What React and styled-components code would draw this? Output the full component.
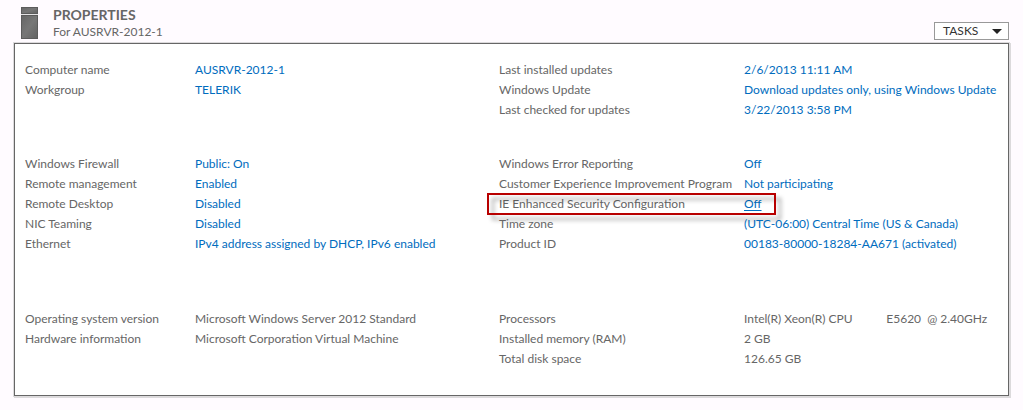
import React from "react";
import styled, { createGlobalStyle, css } from "styled-components";

const GlobalStyle = createGlobalStyle`
  *, *::before, *::after { box-sizing: border-box; }
  body {
    margin: 0;
    background: #fffbff;
    color: #666;
    font: 12px/20px Lato, "Open Sans", sans-serif;
  }
`;

const Page = styled.main`
  padding: 7px 14px 14px;
`;

const Header = styled.header`
  display: flex;
  height: 36px;
  padding-left: 7px;
`;

const ServerIcon = styled.svg`
  flex: none;
  width: 17px;
  height: 32px;
  margin-right: 15px;
`;

const Heading = styled.div`
  flex: 1;
`;

const Title = styled.h1`
  margin: 0;
  font-size: 14px;
  line-height: 16px;
`;

const Subtitle = styled.p`
  margin: 0;
  line-height: 18px;
`;

const TasksButton = styled.button`
  display: flex;
  align-items: center;
  justify-content: space-between;
  align-self: flex-end;
  width: 75px;
  height: 18px;
  margin-bottom: 3px;
  padding: 0 6px 0 8px;
  border: 1px solid #999;
  background: #fff;
  color: #333;
  font: inherit;
  line-height: 16px;
`;

const Panel = styled.section`
  display: flex;
  flex-direction: column;
  padding: 16px 10px 26px;
  border: 1px solid #666;
  background: #fff;
  box-shadow: 0 0 0 1px #dcdadc, 1px 1px 0 1px #dcdadc;
`;

const Group = styled.div`
  display: grid;
  grid-template-columns: minmax(0, 474fr) minmax(0, 499fr);

  & + & { margin-top: 34px; }
  & + & + & { margin-top: 55px; }
`;

const List = styled.dl`
  margin: 0;
`;

const Row = styled.div`
  position: relative;
  display: flex;
  white-space: pre;

  ${(p) =>
    p.$highlighted &&
    css`
      &::after {
        content: "";
        position: absolute;
        top: -1px;
        left: -12px;
        width: 289px;
        height: 22px;
        border: 2px solid #b80000;
        filter: drop-shadow(5px 5px 2px rgba(0, 0, 0, 0.35));
        pointer-events: none;
      }
    `}
`;

const Label = styled.dt`
  flex: none;
  width: ${(p) => (p.$wide ? 245 : 170)}px;
`;

const Value = styled.dd`
  margin: 0;
`;

const ValueLink = styled.a`
  color: #006cbe;
  text-decoration: ${(p) => (p.$underlined ? "underline" : "none")};
  text-underline-offset: 2px;
  text-decoration-skip-ink: none;

  &:hover { text-decoration: underline; }
`;

const groups = [
  {
    left: [
      { label: "Computer name", value: "AUSRVR-2012-1", link: true },
      { label: "Workgroup", value: "TELERIK", link: true },
    ],
    right: [
      { label: "Last installed updates", value: "2/6/2013 11:11 AM", link: true },
      { label: "Windows Update", value: "Download updates only, using Windows Update", link: true },
      { label: "Last checked for updates", value: "3/22/2013 3:58 PM", link: true },
    ],
  },
  {
    left: [
      { label: "Windows Firewall", value: "Public: On", link: true },
      { label: "Remote management", value: "Enabled", link: true },
      { label: "Remote Desktop", value: "Disabled", link: true },
      { label: "NIC Teaming", value: "Disabled", link: true },
      { label: "Ethernet", value: "IPv4 address assigned by DHCP, IPv6 enabled", link: true },
    ],
    right: [
      { label: "Windows Error Reporting", value: "Off", link: true },
      { label: "Customer Experience Improvement Program", value: "Not participating", link: true },
      { label: "IE Enhanced Security Configuration", value: "Off", link: true, highlighted: true },
      { label: "Time zone", value: "(UTC-06:00) Central Time (US & Canada)", link: true },
      { label: "Product ID", value: "00183-80000-18284-AA671 (activated)", link: true },
    ],
  },
  {
    left: [
      { label: "Operating system version", value: "Microsoft Windows Server 2012 Standard" },
      { label: "Hardware information", value: "Microsoft Corporation Virtual Machine" },
    ],
    right: [
      { label: "Processors", value: "Intel(R) Xeon(R) CPU           E5620  @ 2.40GHz" },
      { label: "Installed memory (RAM)", value: "2 GB" },
      { label: "Total disk space", value: "126.65 GB" },
    ],
  },
];

function PropertyList({ items, wide }) {
  return (
    <List>
      {items.map(({ label, value, link, highlighted }) => (
        <Row key={label} $highlighted={highlighted}>
          <Label $wide={wide}>{label}</Label>
          <Value>
            {link ? (
              <ValueLink href="#" $underlined={highlighted}>{value}</ValueLink>
            ) : (
              value
            )}
          </Value>
        </Row>
      ))}
    </List>
  );
}

export default function App() {
  return (
    <>
      <GlobalStyle />
      <Page>
        <Header>
          <ServerIcon viewBox="0 0 17 32" aria-hidden="true">
            <defs>
              <linearGradient id="server" x1="0" y1="0" x2="1" y2="1">
                <stop offset="0" stopColor="#666" />
                <stop offset="0.5" stopColor="#777" />
                <stop offset="1" stopColor="#626262" />
              </linearGradient>
            </defs>
            <rect x="0.5" y="0.5" width="16" height="6" fill="url(#server)" stroke="#5c5c5c" />
            <rect x="0" y="7" width="17" height="1" fill="#e4e2e4" />
            <rect x="0.5" y="8.5" width="16" height="23" fill="url(#server)" stroke="#5c5c5c" />
          </ServerIcon>
          <Heading>
            <Title>PROPERTIES</Title>
            <Subtitle>For AUSRVR-2012-1</Subtitle>
          </Heading>
          <TasksButton type="button">
            TASKS
            <svg width="10" height="5" viewBox="0 0 10 5" aria-hidden="true">
              <path d="M0 0h10L5 5z" fill="#222" />
            </svg>
          </TasksButton>
        </Header>
        <Panel>
          {groups.map((group, index) => (
            <Group key={index}>
              <PropertyList items={group.left} />
              <PropertyList items={group.right} wide />
            </Group>
          ))}
        </Panel>
      </Page>
    </>
  );
}
